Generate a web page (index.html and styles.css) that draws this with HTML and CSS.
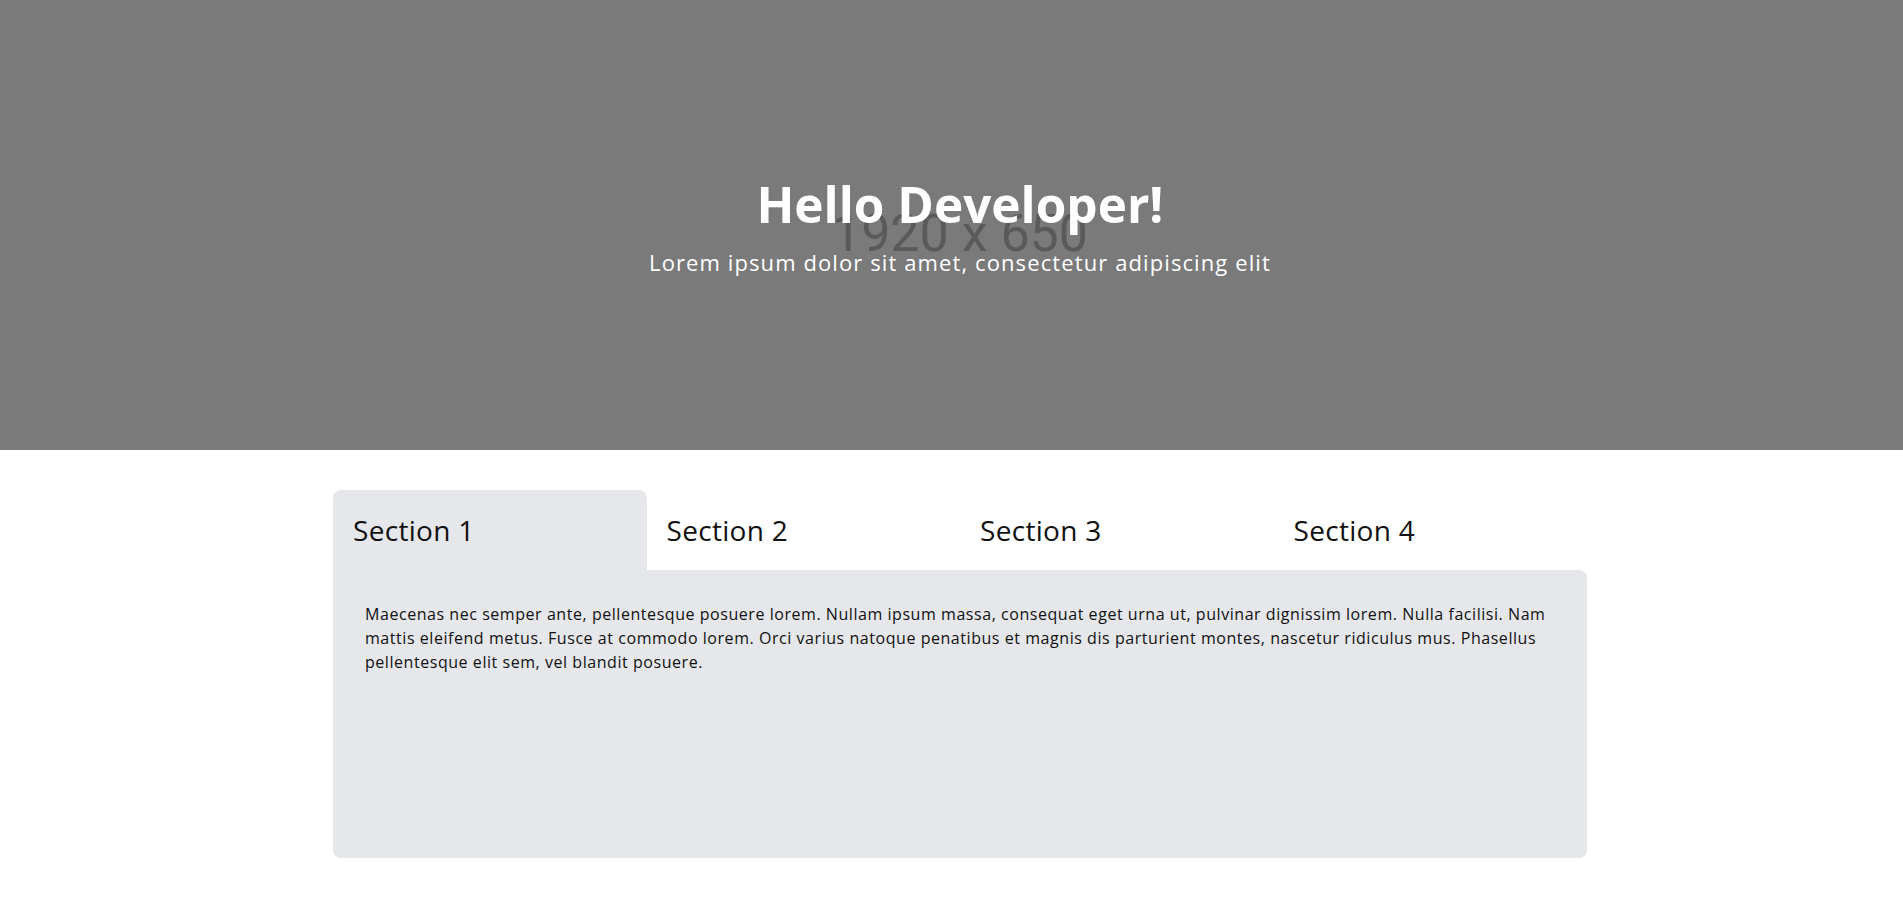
FILE: index.html
```html
<!DOCTYPE html>
<html lang="en">
<head>
<meta charset="utf-8">
<title>Hello Developer!</title>
<link rel="stylesheet" href="styles.css">
</head>
<body>
<div class="page">
  <header class="hero">
    <div class="hero-image"><span>1920 x 650</span></div>
    <div class="hero-content">
      <h1 class="hero-title">Hello Developer!</h1>
      <p class="hero-subtitle">Lorem ipsum dolor sit amet, consectetur adipiscing elit</p>
    </div>
  </header>
  <main class="tabs">
    <div class="tab-list">
      <button class="tab tab-active">Section 1</button>
      <button class="tab">Section 2</button>
      <button class="tab">Section 3</button>
      <button class="tab">Section 4</button>
    </div>
    <div class="tab-panel">
      <p>Maecenas nec semper ante, pellentesque posuere lorem. Nullam ipsum massa, consequat eget urna ut, pulvinar dignissim lorem. Nulla facilisi. Nam mattis eleifend metus. Fusce at commodo lorem. Orci varius natoque penatibus et magnis dis parturient montes, nascetur ridiculus mus. Phasellus pellentesque elit sem, vel blandit posuere.</p>
    </div>
  </main>
</div>
</body>
</html>
```

FILE: styles.css
```css
html, body {
  margin: 0;
  padding: 0;
  overflow-x: hidden;
  background: #ffffff;
}

.page {
  width: 1920px;
  font-family: "Open Sans", "Liberation Sans", sans-serif;
  color: #111111;
}

.hero {
  position: relative;
  height: 450px;
  background: #7a7a7a;
  display: flex;
  flex-direction: column;
  align-items: center;
  justify-content: center;
  color: #ffffff;
}

.hero-image {
  position: absolute;
  inset: 0;
  display: flex;
  align-items: center;
  justify-content: center;
  padding-top: 17px;
  box-sizing: border-box;
  font-family: Roboto, "Liberation Sans", sans-serif;
  font-size: 52px;
  color: #5a5a5a;
}

.hero-content {
  position: relative;
  text-align: center;
  padding-top: 2px;
}

.hero-title {
  margin: 0;
  font-size: 49.5px;
  font-weight: 700;
  line-height: 58px;
}

.hero-subtitle {
  margin: 13px 0 0;
  font-size: 22px;
  line-height: 32px;
  font-weight: 400;
  letter-spacing: 1.1px;
}

.tabs {
  width: 1254px;
  margin: 40px auto 41px;
}

.tab-list {
  display: grid;
  grid-template-columns: repeat(4, 1fr);
}

.tab {
  height: 80px;
  padding: 0 20px;
  border: 0;
  background: transparent;
  text-align: left;
  font-family: inherit;
  font-size: 28px;
  letter-spacing: 0.3px;
  color: #111111;
  border-radius: 8px 8px 0 0;
  cursor: pointer;
}

.tab-active {
  background: #e5e7eb;
}

.tab-panel {
  height: 288px;
  box-sizing: border-box;
  padding: 32px;
  background: #e5e7eb;
  border-radius: 0 8px 8px 8px;
}

.tab-panel p {
  margin: 0;
  font-size: 16px;
  line-height: 24px;
  letter-spacing: 0.55px;
}
```
